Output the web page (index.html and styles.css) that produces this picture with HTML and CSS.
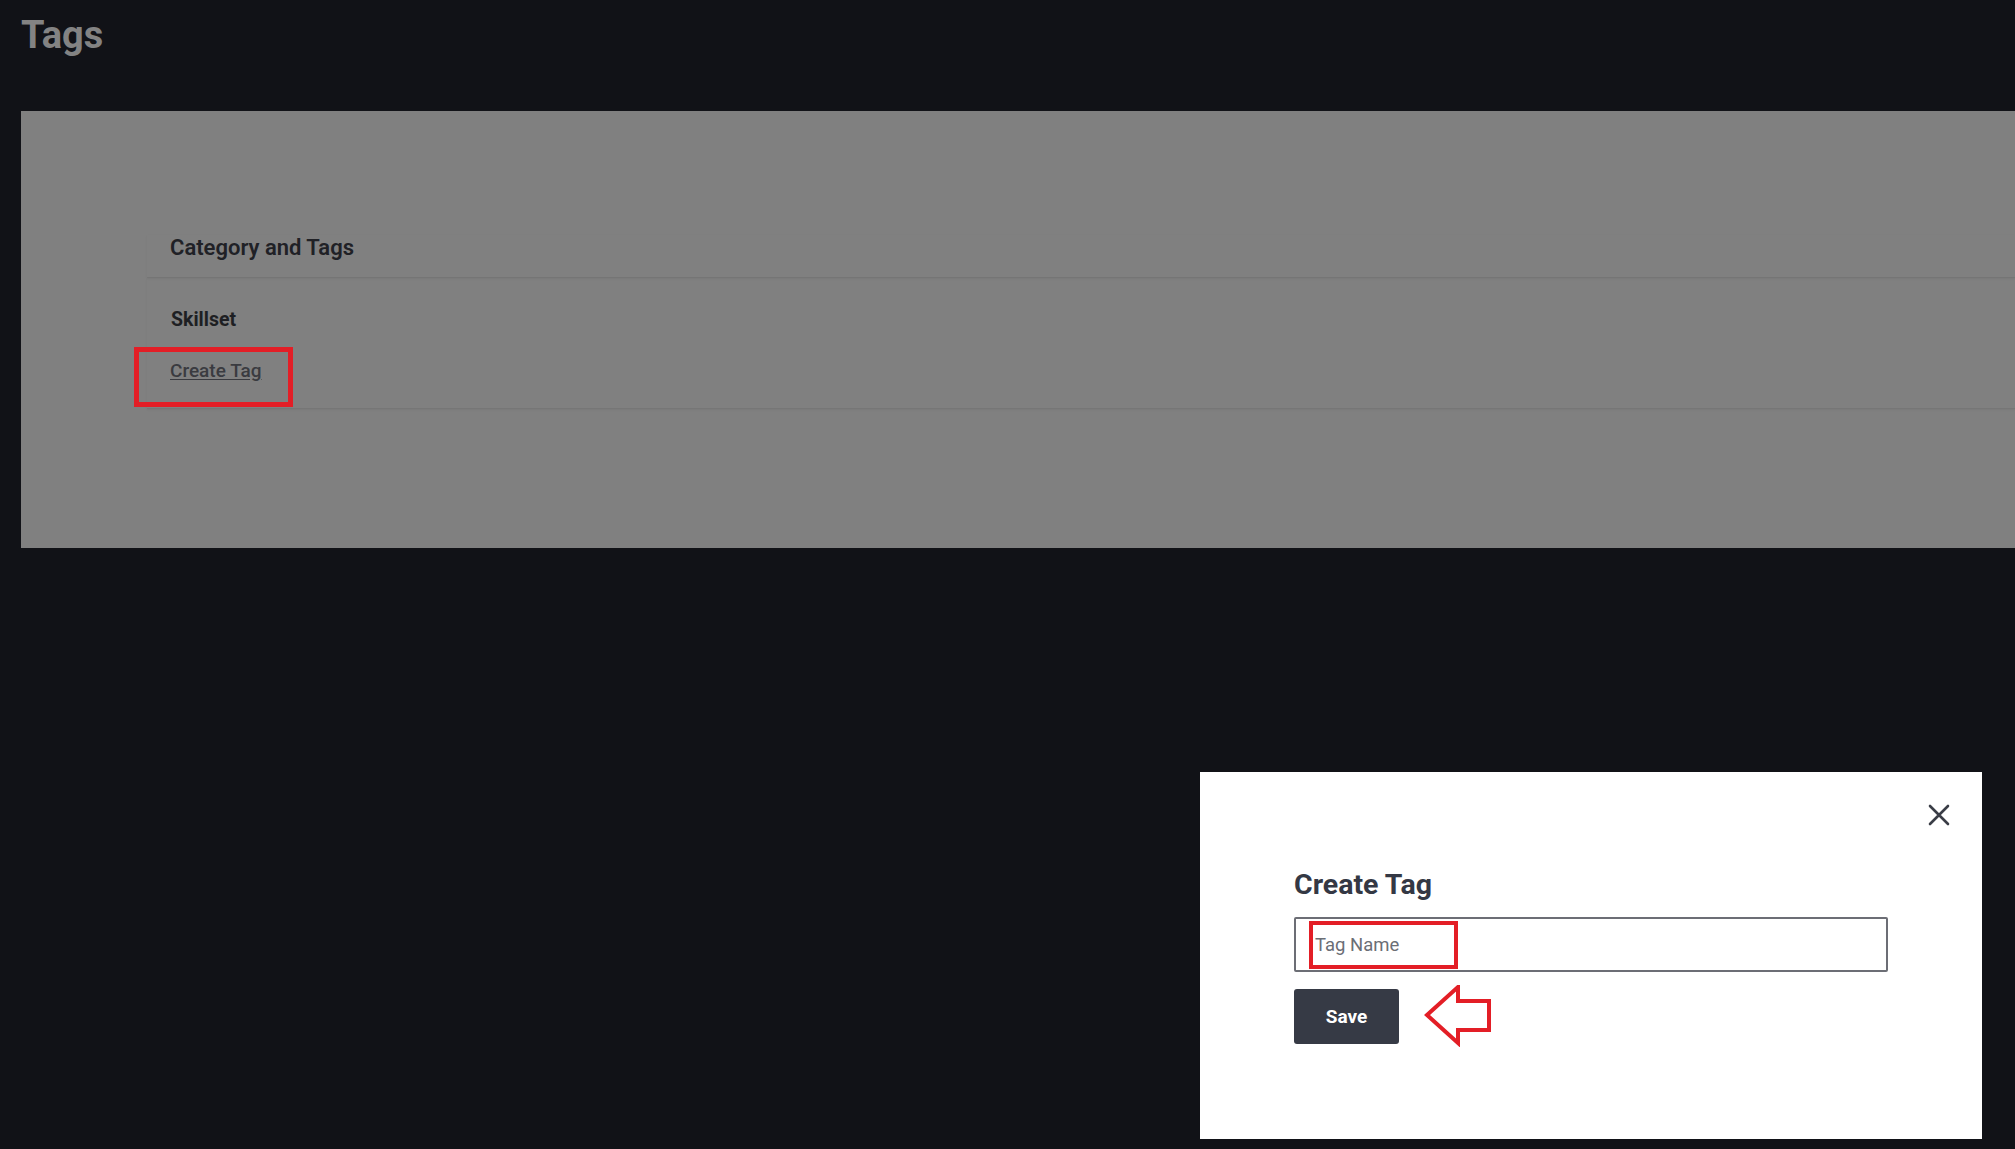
FILE: index.html
```html
<!DOCTYPE html>
<html lang="en">
<head>
<meta charset="utf-8">
<title>Tags</title>
<link rel="stylesheet" href="styles.css">
</head>
<body>
<div class="page">
  <h1 class="page-title">Tags</h1>
  <section class="panel">
    <div class="card">
      <div class="card-header">
        <h2 class="card-title">Category and Tags</h2>
      </div>
      <div class="card-body">
        <div class="category">Skillset</div>
        <div class="link-row">
          <a class="create-link" href="#">Create Tag</a>
          <span class="highlight highlight-link"></span>
        </div>
      </div>
    </div>
  </section>
</div>

<div class="modal">
  <button class="close" type="button" aria-label="Close">
    <svg width="22" height="22" viewBox="0 0 22 22"><path d="M2 2 L20 20 M20 2 L2 20" stroke="#3a3d46" stroke-width="2.6" stroke-linecap="round" fill="none"/></svg>
  </button>
  <h3 class="modal-title">Create Tag</h3>
  <div class="field">
    <input class="tag-input" type="text" placeholder="Tag Name">
    <span class="highlight highlight-input"></span>
  </div>
  <div class="actions">
    <button class="save" type="button">Save</button>
    <svg class="arrow" width="70" height="62" viewBox="0 0 70 62"><polygon points="4,30 35,2 35,16 66,16 66,45 35,45 35,58" fill="#fff" stroke="#e31e26" stroke-width="4" stroke-linejoin="miter"/></svg>
  </div>
</div>
</body>
</html>
```

FILE: styles.css
```css
* { box-sizing: border-box; }

html, body {
  margin: 0;
  padding: 0;
  background: #111217;
  font-family: Roboto, "Liberation Sans", Arial, sans-serif;
  width: 2015px;
  height: 1149px;
  overflow: hidden;
}

.page {
  padding: 15px 0 0 21px;
}

.page-title {
  margin: 0;
  font-size: 38px;
  line-height: 40px;
  font-weight: 700;
  color: #838383;
}

.panel {
  margin-top: 56px;
  background: #808080;
  height: 437px;
  padding: 124px 0 0 126px;
}

.card-header {
  padding: 0 0 16px 23px;
  border-bottom: 1px solid #767676;
  box-shadow: 0 1px 2px rgba(0, 0, 0, 0.06);
}

.card-title {
  margin: 0;
  font-size: 22px;
  line-height: 26px;
  font-weight: 600;
  color: #202126;
}

.card-body {
  padding: 30px 0 26px 24px;
  border-bottom: 1px solid #767676;
  box-shadow: 0 1px 2px rgba(0, 0, 0, 0.06);
}

.category {
  font-size: 19.5px;
  line-height: 24px;
  font-weight: 700;
  color: #1e1f23;
}

.link-row {
  position: relative;
  margin-top: 27px;
  margin-left: -1px;
}

.create-link {
  font-size: 19px;
  line-height: 23px;
  font-weight: 500;
  color: #3a3b40;
  text-decoration: underline;
  text-underline-offset: 2px;
}

.highlight {
  position: absolute;
  border: 4px solid #e31e26;
  pointer-events: none;
}

.highlight-link {
  left: -36px;
  top: -12px;
  width: 159px;
  height: 60px;
  border-width: 5px;
}

.modal {
  position: absolute;
  left: 1200px;
  top: 772px;
  width: 782px;
  height: 367px;
  background: #ffffff;
  padding: 97px 0 0 94px;
}

.close {
  position: absolute;
  top: 32px;
  right: 32px;
  width: 22px;
  height: 22px;
  padding: 0;
  border: 0;
  background: transparent;
  display: flex;
}

.modal-title {
  margin: 0;
  font-size: 28.5px;
  line-height: 31px;
  font-weight: 700;
  color: #343844;
}

.field {
  position: relative;
  margin-top: 17px;
  width: 594px;
}

.tag-input {
  display: block;
  width: 594px;
  height: 55px;
  border: 2px solid #6c6e75;
  border-radius: 2px;
  padding: 0 0 0 19px;
  font-family: Roboto, "Liberation Sans", Arial, sans-serif;
  font-size: 18.5px;
  color: #333;
  background: #fff;
  outline: none;
}

.tag-input::placeholder {
  color: #6b6e75;
  opacity: 1;
}

.highlight-input {
  left: 15px;
  top: 4px;
  width: 149px;
  height: 48px;
}

.actions {
  margin-top: 13px;
  display: flex;
  align-items: center;
  gap: 24px;
}

.save {
  width: 105px;
  height: 55px;
  border: 0;
  border-radius: 3px;
  background: #363a45;
  color: #ffffff;
  font-family: Roboto, "Liberation Sans", Arial, sans-serif;
  font-size: 19px;
  font-weight: 700;
  padding: 0;
}

.arrow {
  display: block;
}
```
